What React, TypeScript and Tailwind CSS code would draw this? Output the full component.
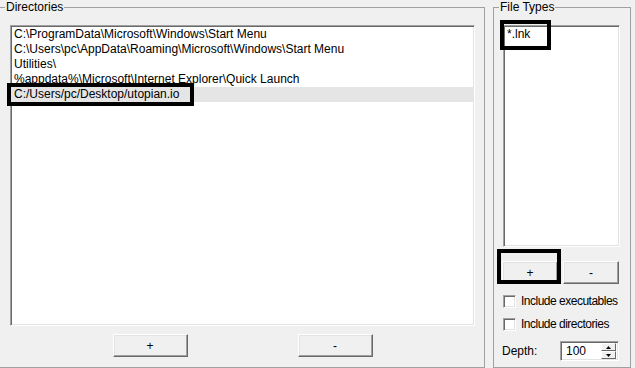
const font = { fontFamily: '"Liberation Sans", Arial, sans-serif' };

const dirs = [
  "C:\\ProgramData\\Microsoft\\Windows\\Start Menu",
  "C:\\Users\\pc\\AppData\\Roaming\\Microsoft\\Windows\\Start Menu",
  "Utilities\\",
  "%appdata%\\Microsoft\\Internet Explorer\\Quick Launch",
  "C:/Users/pc/Desktop/utopian.io",
];

function WinButton({ label, className = "" }: { label: string; className?: string }) {
  return (
    <button
      className={
        "h-[23px] bg-[#f0f0f0] border border-t-white border-l-white border-b-[#696969] border-r-[#696969] shadow-[inset_-1px_-1px_0_#a0a0a0,inset_1px_1px_0_#e3e3e3] text-[12px] text-black leading-none " +
        className
      }
    >
      {label}
    </button>
  );
}

function Sunken({ className = "", children }: { className?: string; children?: React.ReactNode }) {
  return (
    <div
      className={
        "bg-white border border-t-[#a0a0a0] border-l-[#a0a0a0] border-b-white border-r-white shadow-[inset_1px_1px_0_#696969,inset_-1px_-1px_0_#e3e3e3] " +
        className
      }
    >
      {children}
    </div>
  );
}

function Check({ label }: { label: string }) {
  return (
    <div className="flex items-center h-[13px]">
      <Sunken className="w-[13px] h-[13px] shrink-0" />
      <span className="ml-[5px] text-[12px] tracking-[-0.5px] leading-[13px] whitespace-nowrap">{label}</span>
    </div>
  );
}

export default function App() {
  return (
    <div className="relative w-[635px] h-[368px] bg-[#f0f0f0] text-black flex overflow-hidden" style={font}>
      {/* Directories */}
      <fieldset className="shrink-0 min-w-0 w-[485px] h-[368px] border border-l-0 border-[#a0a0a0] pr-[9px] pl-[10px]">
        <legend className="-ml-[5px] px-[1px] text-[12px] leading-[14px]">Directories</legend>
        <Sunken className="mt-[11px] h-[301px] pt-[1px]">
          <ul className="text-[12px] leading-[15px]">
            {dirs.map((d, i) => (
              <li key={i} className={"pl-[3px] h-[15px] whitespace-nowrap " + (i === 4 ? "bg-[#e5e5e5]" : "")}>
                {d}
              </li>
            ))}
          </ul>
        </Sunken>
        <div className="mt-[8px] flex justify-center gap-[110px]">
          <WinButton label="+" className="w-[75px]" />
          <WinButton label="-" className="w-[75px]" />
        </div>
      </fieldset>

      {/* File Types */}
      <fieldset className="shrink-0 min-w-0 ml-[8px] w-[138px] h-[368px] border border-[#a0a0a0] pl-[9px] pr-[10px]">
        <legend className="-ml-[4px] px-[1px] text-[12px] leading-[14px]">File Types</legend>
        <Sunken className="mt-[11px] h-[222px] pt-[1px]">
          <div className="pl-[3px] text-[12px] leading-[15px]">*.lnk</div>
        </Sunken>
        <div className="mt-[14px] flex gap-[5px] -ml-[1px]">
          <WinButton label="+" className="w-[56px] h-[22px]" />
          <WinButton label="-" className="w-[56px] h-[22px]" />
        </div>
        <div className="mt-[11px] flex flex-col gap-[10px]">
          <Check label="Include executables" />
          <Check label="Include directories" />
        </div>
        <div className="mt-[10px] flex items-center -ml-[1px]">
          <span className="text-[12px] w-[58px]">Depth:</span>
          <Sunken className="w-[59px] h-[20px] flex items-center">
            <span className="pl-[5px] text-[12px] flex-1">100</span>
            <div className="flex flex-col mr-[2px]">
              <div className="w-[15px] h-[8px] bg-[#f0f0f0] border border-t-white border-l-white border-b-[#696969] border-r-[#696969] flex items-center justify-center">
                <svg width="5" height="3" viewBox="0 0 5 3"><path d="M2.5 0L5 3H0z" fill="#000" /></svg>
              </div>
              <div className="w-[15px] h-[8px] bg-[#f0f0f0] border border-t-white border-l-white border-b-[#696969] border-r-[#696969] flex items-center justify-center">
                <svg width="5" height="3" viewBox="0 0 5 3"><path d="M0 0H5L2.5 3z" fill="#000" /></svg>
              </div>
            </div>
          </Sunken>
        </div>
      </fieldset>

      {/* annotation boxes */}
      <div className="absolute left-[7px] top-[83px] w-[187px] h-[23px] border-4 border-black pointer-events-none" />
      <div className="absolute left-[500px] top-[20px] w-[51px] h-[30px] border-4 border-black pointer-events-none" />
      <div className="absolute left-[497px] top-[249px] w-[64px] h-[35px] border-4 border-black pointer-events-none" />
    </div>
  );
}
